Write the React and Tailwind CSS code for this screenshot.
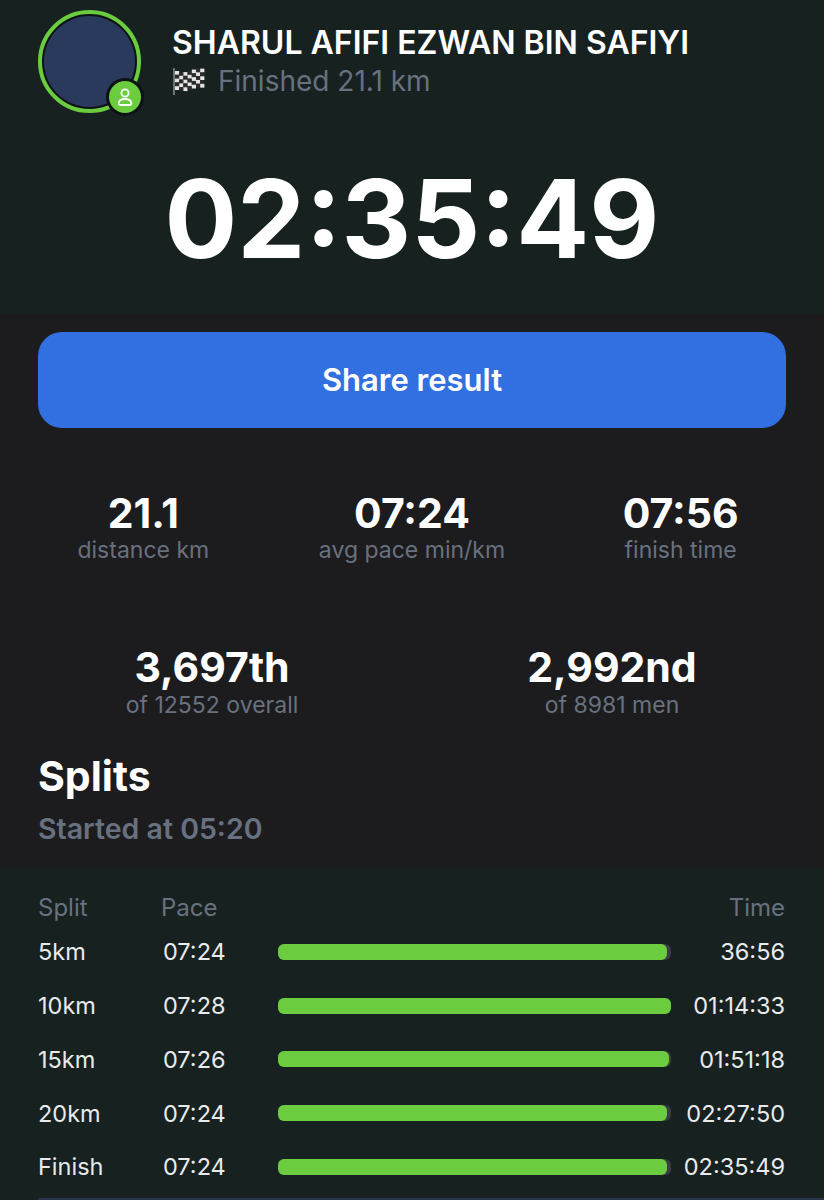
const SPLITS = [
  { label: '5km', pace: '07:24', pct: 99, time: '36:56' },
  { label: '10km', pace: '07:28', pct: 100, time: '01:14:33' },
  { label: '15km', pace: '07:26', pct: 99.6, time: '01:51:18' },
  { label: '20km', pace: '07:24', pct: 99, time: '02:27:50' },
  { label: 'Finish', pace: '07:24', pct: 99, time: '02:35:49' },
]

function CheckeredFlag() {
  const cells = []
  for (let r = 0; r < 5; r++) {
    for (let c = 0; c < 7; c++) {
      cells.push(
        <rect
          key={`${r}-${c}`}
          x={3 + c * 4.2}
          y={5 + r * 3.8 + Math.sin(c * 0.9) * 1.5 - c * 0.2}
          width="4.2"
          height="3.8"
          fill={(r + c) % 2 === 0 ? '#e4e4e4' : '#2b2b2b'}
        />,
      )
    }
  }
  return (
    <svg width="34" height="30" viewBox="0 0 34 30">
      <line x1="2" y1="2" x2="2" y2="29" stroke="#8a8f94" strokeWidth="1.500" />
      {cells}
    </svg>
  )
}

function UserBadgeIcon() {
  return (
    <svg width="20" height="20" viewBox="0 0 20 20" fill="none" stroke="white" strokeWidth="1.8">
      <circle cx="10" cy="6" r="3.6" />
      <path d="M5.5 18h9c1.2 0 2-.9 1.8-2-.4-2.4-2.6-4-6.3-4s-5.900 1.600-6.300 4c-.2 1.100.6 2 1.800 2z" />
    </svg>
  )
}

function Stat({ value, label, labelClass = 'mt-[2px]' }) {
  return (
    <div className="flex flex-col items-center">
      <span className="text-[41px] leading-[42px] font-bold text-white">{value}</span>
      <span className={`text-[23px] leading-[30px] text-[#68717f] ${labelClass}`}>{label}</span>
    </div>
  )
}

function App() {
  return (
    <div className="w-[824px] h-[1200px] overflow-hidden bg-[#1c1c1e] font-['Inter',sans-serif]">
      {/* Header */}
      <div className="h-[314px] bg-[#172120] px-[38px] pt-[10px]">
        <div className="flex items-start gap-[31px]">
          <div className="relative w-[103px] h-[103px] shrink-0 rounded-full border-[4px] border-[#6acc3e] bg-[#0d1214] p-[2px]">
            <div className="w-full h-full rounded-full bg-[#2a3a5c]" />
            <div className="absolute right-[-7px] bottom-[-7px] w-[38px] h-[38px] rounded-full bg-[#0d1214] flex items-center justify-center">
              <div className="w-[32px] h-[32px] rounded-full bg-[#6acc3e] flex items-center justify-center">
                <UserBadgeIcon />
              </div>
            </div>
          </div>
          <div className="flex flex-col pt-[14px]">
            <span className="text-[32px] leading-[38px] font-semibold text-white whitespace-nowrap">
              SHARUL AFIFI EZWAN BIN SAFIYI
            </span>
            <div className="flex items-center gap-[12px] mt-[3px]">
              <CheckeredFlag />
              <span className="text-[28px] leading-[32px] text-[#68717f]">Finished 21.1 km</span>
            </div>
          </div>
        </div>
        <div className="mt-[36px] text-center text-[108px] leading-[140px] font-bold text-white">
          02:35:49
        </div>
      </div>

      {/* Share button + stats */}
      <div className="h-[554px] pt-[18px]">
        <div className="mx-[38px] h-[96px] rounded-[24px] bg-[#3270e2] flex items-center justify-center text-[31px] font-semibold text-white">
          Share result
        </div>
        <div className="mt-[64px] grid grid-cols-3 px-[9px]">
          <Stat value="21.1" label="distance km" labelClass="mt-[1px]" />
          <Stat value="07:24" label="avg pace min/km" labelClass="mt-[1px]" />
          <Stat value="07:56" label="finish time" labelClass="mt-[1px]" />
        </div>
        <div className="mt-[81px] grid grid-cols-2 px-[12px]">
          <Stat value="3,697th" label="of 12552 overall" />
          <Stat value="2,992nd" label="of 8981 men" />
        </div>
        <div className="mx-[38px] mt-[33px] text-[41px] leading-[46px] font-bold text-white">Splits</div>
        <div className="mx-[38px] mt-[13px] text-[28.500px] leading-[34px] font-semibold text-[#68717f]">Started at 05:20</div>
      </div>

      {/* Splits table */}
      <div className="h-[332px] bg-[#172120] pt-[25px] flex flex-col">
        <div className="pl-[38px] pr-[39px]">
          <div className="flex items-center h-[30px] text-[24px] text-[#68717f]">
            <span className="w-[123px]">Split</span>
            <span className="flex-1">Pace</span>
            <span>Time</span>
          </div>
          <div className="flex flex-col">
            {SPLITS.map((s) => (
              <div key={s.label} className="flex items-center h-[53.750px] text-[23.500px] text-[#e8eaec] first:mt-[2px]">
                <span className="w-[125px]">{s.label}</span>
                <span className="w-[115px]">{s.pace}</span>
                <div className="w-[393px] h-[16px] rounded-[6px] bg-[#3a3f44]">
                  <div className="h-full rounded-[6px] bg-[#6acc3e]" style={{ width: `${s.pct}%` }} />
                </div>
                <span className="flex-1 text-right whitespace-nowrap">{s.time}</span>
              </div>
            ))}
          </div>
        </div>
        <div className="mt-auto ml-[38px] h-[2px] bg-[#263548]" />
      </div>
    </div>
  )
}

export default App
